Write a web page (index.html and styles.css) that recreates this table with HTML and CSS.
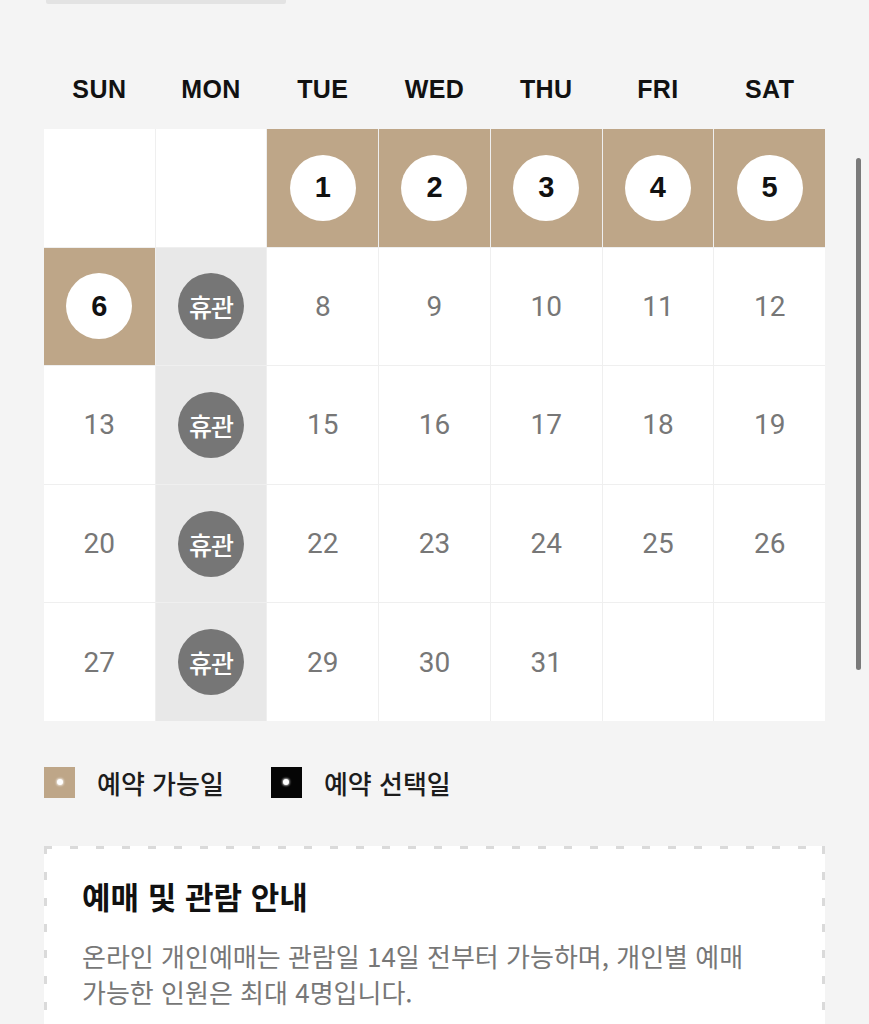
FILE: index.html
```html
<!DOCTYPE html>
<html lang="ko">
<head>
<meta charset="utf-8">
<title>예매 달력</title>
<link rel="stylesheet" href="styles.css">
</head>
<body>
<div class="page">
  <div class="topbar"></div>

  <div class="weekdays">
    <div>SUN</div><div>MON</div><div>TUE</div><div>WED</div><div>THU</div><div>FRI</div><div>SAT</div>
  </div>

  <div class="calendar">
    <div class="cell"></div>
    <div class="cell"></div>
    <div class="cell avail"><span class="circle">1</span></div>
    <div class="cell avail"><span class="circle">2</span></div>
    <div class="cell avail"><span class="circle">3</span></div>
    <div class="cell avail"><span class="circle">4</span></div>
    <div class="cell avail"><span class="circle">5</span></div>

    <div class="cell avail"><span class="circle">6</span></div>
    <div class="cell mon"><span class="closed">휴관</span></div>
    <div class="cell"><span class="num">8</span></div>
    <div class="cell"><span class="num">9</span></div>
    <div class="cell"><span class="num">10</span></div>
    <div class="cell"><span class="num">11</span></div>
    <div class="cell"><span class="num">12</span></div>

    <div class="cell"><span class="num">13</span></div>
    <div class="cell mon"><span class="closed">휴관</span></div>
    <div class="cell"><span class="num">15</span></div>
    <div class="cell"><span class="num">16</span></div>
    <div class="cell"><span class="num">17</span></div>
    <div class="cell"><span class="num">18</span></div>
    <div class="cell"><span class="num">19</span></div>

    <div class="cell"><span class="num">20</span></div>
    <div class="cell mon"><span class="closed">휴관</span></div>
    <div class="cell"><span class="num">22</span></div>
    <div class="cell"><span class="num">23</span></div>
    <div class="cell"><span class="num">24</span></div>
    <div class="cell"><span class="num">25</span></div>
    <div class="cell"><span class="num">26</span></div>

    <div class="cell"><span class="num">27</span></div>
    <div class="cell mon"><span class="closed">휴관</span></div>
    <div class="cell"><span class="num">29</span></div>
    <div class="cell"><span class="num">30</span></div>
    <div class="cell"><span class="num">31</span></div>
    <div class="cell"></div>
    <div class="cell"></div>
  </div>

  <div class="legend">
    <div class="legend-item"><span class="swatch swatch-avail"></span><span class="legend-label">예약 가능일</span></div>
    <div class="legend-item"><span class="swatch swatch-sel"></span><span class="legend-label">예약 선택일</span></div>
  </div>

  <div class="notice">
    <h2 class="notice-title">예매 및 관람 안내</h2>
    <p class="notice-text">온라인 개인예매는 관람일 14일 전부터 가능하며, 개인별 예매 가능한 인원은 최대 4명입니다.</p>
  </div>
</div>
<div class="scrollbar"></div>
</body>
</html>
```

FILE: styles.css
```css
html, body {
  margin: 0;
  padding: 0;
}

body {
  background: #f4f4f4;
  font-family: "Noto Sans CJK KR", "Noto Sans", sans-serif;
  overflow: hidden;
}

.page {
  padding: 0 44px;
}

.topbar {
  width: 240px;
  height: 4px;
  margin-left: 2px;
  background: #e3e3e3;
  border-radius: 0 0 2px 2px;
}

.weekdays {
  display: grid;
  grid-template-columns: repeat(7, 1fr);
  column-gap: 1px;
  margin-top: 65px;
  height: 40px;
  line-height: 40px;
  text-align: center;
  font-family: "Liberation Sans", Arial, sans-serif;
  font-weight: 700;
  font-size: 25px;
  letter-spacing: 0.4px;
  color: #111;
}

.calendar {
  display: grid;
  grid-template-columns: repeat(7, 1fr);
  grid-auto-rows: 117.6px;
  gap: 1px;
  margin-top: 20px;
  background: #efefef;
}

.cell {
  background: #fff;
  display: flex;
  align-items: center;
  justify-content: center;
}

.cell.avail {
  background: #bea688;
}

.cell.mon {
  background: #e8e8e8;
}

.circle {
  width: 66px;
  height: 66px;
  border-radius: 50%;
  background: #fff;
  display: flex;
  align-items: center;
  justify-content: center;
  font-family: "Liberation Sans", Arial, sans-serif;
  font-weight: 700;
  font-size: 29px;
  color: #111;
}

.closed {
  width: 66px;
  height: 66px;
  border-radius: 50%;
  background: #767676;
  display: flex;
  align-items: center;
  justify-content: center;
  font-size: 25px;
  font-weight: 500;
  color: #fff;
  letter-spacing: -1px;
}

.num {
  font-family: Roboto, "Liberation Sans", sans-serif;
  font-size: 28px;
  color: #777;
}

.legend {
  display: flex;
  gap: 47px;
  margin-top: 46px;
  height: 31px;
  align-items: center;
}

.legend-item {
  display: flex;
  align-items: center;
  gap: 22px;
}

.swatch {
  width: 31px;
  height: 31px;
  display: flex;
  align-items: center;
  justify-content: center;
}

.swatch::after {
  content: "";
  width: 6px;
  height: 6px;
  border-radius: 50%;
  background: #fff;
  box-shadow: 0 0 2px 1px rgba(255, 255, 255, 0.6);
}

.swatch-avail {
  background: #bea688;
}

.swatch-sel {
  background: #050505;
}

.legend-label {
  font-size: 26px;
  font-weight: 500;
  color: #1c1c1c;
  line-height: 31px;
}

.notice {
  margin-top: 48px;
  background-color: #fff;
  background-image:
    repeating-linear-gradient(to right, #dadada 0 8px, transparent 8px 26px),
    repeating-linear-gradient(to bottom, #dadada 0 8px, transparent 8px 26px),
    repeating-linear-gradient(to bottom, #dadada 0 8px, transparent 8px 26px);
  background-size: 100% 3px, 3px 100%, 3px 100%;
  background-position: 0 0, 0 0, 100% 0;
  background-repeat: no-repeat;
  padding: 30px 60px 40px 38px;
}

.notice-title {
  margin: 0;
  font-size: 31px;
  font-weight: 700;
  line-height: 40px;
  color: #111;
}

.notice-text {
  margin: 22px 0 0;
  font-size: 26px;
  line-height: 36px;
  color: #777;
}

.scrollbar {
  position: fixed;
  right: 8px;
  top: 158px;
  width: 5px;
  height: 512px;
  border-radius: 3px;
  background: #7a7a7a;
}
```
